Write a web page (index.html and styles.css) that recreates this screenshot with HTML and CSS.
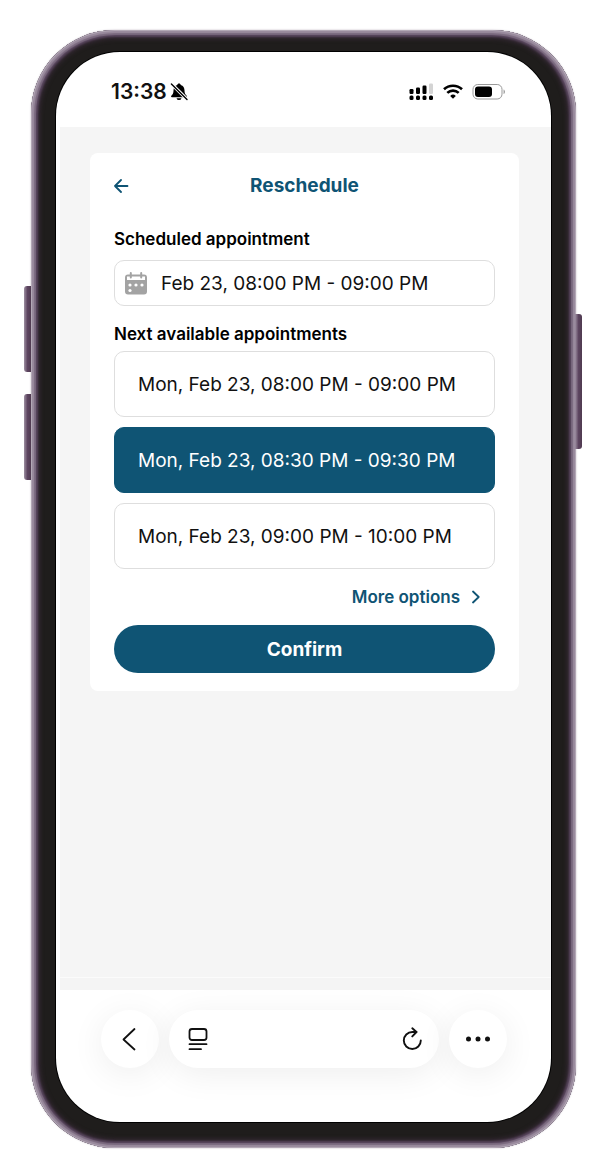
FILE: index.html
```html
<!DOCTYPE html>
<html lang="en">
<head>
    <meta charset="UTF-8">
    <meta name="viewport" content="width=device-width, initial-scale=1.0">
    <title>Reschedule</title>
    <link rel="stylesheet" href="styles.css">
</head>
<body>
    <div class="phone">
        <span class="side-key volume-up"></span>
        <span class="side-key volume-down"></span>
        <span class="side-key power"></span>

        <div class="screen">
            <header class="status-bar">
                <span class="clock">13:38</span>
                <svg class="bell" width="18" height="18" viewBox="0 0 18 18">
                    <path d="M9 0.500c-1 0-1.600.6-1.700 1.400C4.600 2.700 3.500 4.800 3.500 7.500c0 2.800-.8 3.900-2.200 5.200-.5.600-.2 1.500.6 1.500h14.200c.8 0 1.100-.9.600-1.500-1.400-1.300-2.200-2.400-2.200-5.200 0-2.700-1.100-4.800-3.800-5.600C10.600 1.100 10 .5 9 .5z M6.500 15.200a2.600 2.600 0 0 0 5 0z"/>
                    <path d="M2 1.400 17 16.400" stroke="#fff" stroke-width="3.400"/>
                    <path d="M1.400 1 17 16.600" stroke="#000" stroke-width="1.400" stroke-linecap="round"/>
                </svg>
                <div class="status-icons">
                    <svg width="25" height="18" viewBox="0 0 25 18">
                        <rect x="0.500" y="6" width="4" height="5" rx="1.200"/>
                        <rect x="7" y="4.500" width="4" height="6.500" rx="1.200"/>
                        <rect x="13.500" y="2.500" width="4" height="8.500" rx="1.200"/>
                        <rect x="20" y="0.500" width="4" height="10.500" rx="1.200" fill="#d4d4d4"/>
                        <rect x="0.500" y="12.500" width="4" height="4.500" rx="1.500"/>
                        <rect x="7" y="12.500" width="4" height="4.500" rx="1.500"/>
                        <rect x="13.500" y="12.500" width="4" height="4.500" rx="1.500"/>
                        <rect x="20" y="12.500" width="4" height="4.500" rx="1.500"/>
                    </svg>
                    <svg width="20" height="18" viewBox="0 0 20 18" fill="none" stroke="#000" stroke-width="2.600">
                        <path d="M1 6.300a13 13 0 0 1 18 0"/>
                        <path d="M4.300 9.900a8.200 8.200 0 0 1 11.400 0"/>
                        <path d="M10 15.800 7.200 12.900a4 4 0 0 1 5.600 0z" fill="#000" stroke="none"/>
                    </svg>
                    <svg width="34" height="18" viewBox="0 0 34 18">
                        <rect x="1" y="1.500" width="29" height="14.500" rx="4.800" fill="#fff" stroke="#999"/>
                        <rect x="3" y="3.500" width="17" height="10.500" rx="3"/>
                        <path d="M31.600 6.500c1.600.6 1.600 4 0 4.600z" fill="#888"/>
                    </svg>
                </div>
            </header>

            <main class="page">
                <section class="card">
                    <div class="card-header">
                        <button class="back" type="button" aria-label="Back">
                            <svg width="16" height="16" viewBox="0 0 16 16" fill="none" stroke="currentColor" stroke-width="1.800" stroke-linecap="round" stroke-linejoin="round">
                                <path d="M13.500 8H1M7 2 1 8l6 6"/>
                            </svg>
                        </button>
                        <h1>Reschedule</h1>
                    </div>

                    <label class="section-title" for="scheduled">Scheduled appointment</label>
                    <div class="date-field">
                        <svg width="24" height="24" viewBox="0 0 24 24" fill="#a3a3a3">
                            <path d="M4 3.500h16a3 3 0 0 1 3 3v14a3 3 0 0 1-3 3H4a3 3 0 0 1-3-3v-14a3 3 0 0 1 3-3z"/>
                            <path d="M3 5.500h18v3.500H3z" fill="#fff"/>
                            <path d="M6.800 2v4.500M17.200 2v4.500" stroke="#a3a3a3" stroke-width="2" stroke-linecap="round"/>
                            <g fill="#fff">
                                <circle cx="6" cy="14" r="1.600"/>
                                <circle cx="12" cy="14" r="1.600"/>
                                <circle cx="18" cy="14" r="1.600"/>
                                <circle cx="6" cy="19.500" r="1.600"/>
                            </g>
                        </svg>
                        <input id="scheduled" type="text" value="Feb 23, 08:00 PM - 09:00 PM" readonly>
                    </div>

                    <h2 class="section-title">Next available appointments</h2>
                    <div class="options">
                        <button class="option" type="button">Mon, Feb 23, 08:00 PM - 09:00 PM</button>
                        <button class="option selected" type="button" aria-pressed="true">Mon, Feb 23, 08:30 PM - 09:30 PM</button>
                        <button class="option" type="button">Mon, Feb 23, 09:00 PM - 10:00 PM</button>
                    </div>

                    <a class="more" href="#">
                        More options
                        <svg width="8" height="14" viewBox="0 0 8 14" fill="none" stroke="currentColor" stroke-width="1.800" stroke-linecap="round" stroke-linejoin="round">
                            <path d="M1 1.500 6.700 7 1 12.500"/>
                        </svg>
                    </a>
                    <button class="confirm" type="button">Confirm</button>
                </section>
                <div class="page-edge"></div>
            </main>

            <nav class="browser-bar">
                <button class="round-button" type="button" aria-label="Previous page">
                    <svg width="16" height="24" viewBox="0 0 16 24" fill="none" stroke="#111" stroke-width="1.800" stroke-linecap="round" stroke-linejoin="round">
                        <path d="M12.500 2 1.500 12.500l11 10"/>
                    </svg>
                </button>
                <div class="address">
                    <button type="button" aria-label="Page menu">
                        <svg width="20" height="24" viewBox="0 0 20 24" fill="none" stroke="#111" stroke-width="1.800" stroke-linecap="round">
                            <rect x="1.500" y="2" width="17" height="11" rx="2.500"/>
                            <path d="M1.500 17.200h17M1.500 22.200h11.500"/>
                        </svg>
                    </button>
                    <button type="button" aria-label="Reload">
                        <svg width="20" height="24" viewBox="0 0 20 24" fill="none" stroke="#111" stroke-width="1.900" stroke-linecap="round" stroke-linejoin="round">
                            <path d="M18.800 13.500a8.500 8.500 0 1 1-8.500-8.500h4"/>
                            <path d="M10.300 1.300 14.500 5 10.300 9.400"/>
                        </svg>
                    </button>
                </div>
                <button class="round-button" type="button" aria-label="More">
                    <svg width="26" height="6" viewBox="0 0 26 6" fill="#111">
                        <circle cx="3.500" cy="3" r="2.500"/>
                        <circle cx="13" cy="3" r="2.500"/>
                        <circle cx="22.500" cy="3" r="2.500"/>
                    </svg>
                </button>
            </nav>
        </div>
    </div>
</body>
</html>
```

FILE: styles.css
```css
* {
    box-sizing: border-box;
}
body {
    margin: 0;
    min-height: 100vh;
    padding: 30px 24px 21px 31px;
    display: flex;
    background: #fff;
    color: #111;
    font-family: Inter, sans-serif;
}
h1, h2 {
    margin: 0;
}
button {
    font-family: inherit;
    cursor: pointer;
}
svg {
    display: block;
    flex: none;
}

/* phone frame */
.phone {
    position: relative;
    flex: 1;
    display: flex;
    padding: 22px 25px 26px;
    border-radius: 84px;
    background: #1f1d1c;
    box-shadow:
        inset 0 0 0 1px #b3a8b6,
        inset 0 0 1px 3px #9a8b9e,
        inset 0 0 1px 5px #7b6a7f,
        inset 0 0 2px 7px #55435a,
        inset 0 0 4px 9px #352934,
        0 0 2px #b9afbc;
}
.side-key {
    position: absolute;
    width: 7px;
    background: linear-gradient(to right, #9d8fa1, #5d4560 50%, #4f3a50);
}
.volume-up {
    left: -7px;
    top: 256px;
    height: 86px;
    border-radius: 3px 0 0 3px;
}
.volume-down {
    left: -7px;
    top: 364px;
    height: 86px;
    border-radius: 3px 0 0 3px;
}
.power {
    right: -6px;
    top: 284px;
    height: 135px;
    border-radius: 0 3px 3px 0;
}
.screen {
    flex: 1;
    display: flex;
    flex-direction: column;
    border-radius: 64px;
    overflow: hidden;
    background: #fff;
    box-shadow: 0 0 0 1px #000;
}

/* status bar */
.status-bar {
    display: flex;
    align-items: center;
    height: 75px;
    padding: 4px 45px 0 55px;
}
.clock {
    font-size: 21px;
    font-weight: 600;
}
.bell {
    margin-left: 3px;
}
.status-icons {
    display: flex;
    gap: 9px;
    margin-left: auto;
}

/* page */
.page {
    flex: 1;
    display: flex;
    flex-direction: column;
    margin-left: 4px;
    padding-top: 26px;
    background: #f5f5f5;
}
.card {
    margin: 0 32px 0 30px;
    padding: 20px 24px 18px;
    border-radius: 8px;
    background: #fff;
}
.card-header {
    display: grid;
    grid-template-columns: 16px 1fr 16px;
    align-items: center;
    margin-bottom: 28px;
}
.card-header h1 {
    font-size: 19px;
    line-height: 26px;
    font-weight: 700;
    text-align: center;
    color: #0f5474;
}
.back {
    padding: 0;
    border: none;
    background: none;
    color: #0f5474;
}
.section-title {
    display: block;
    font-size: 17px;
    line-height: 24px;
    font-weight: 600;
    color: #000;
}
.date-field {
    display: flex;
    align-items: center;
    gap: 13px;
    height: 46px;
    margin: 9px 0 16px;
    padding: 0 9px;
    border: 1px solid #dedede;
    border-radius: 10px;
}
.date-field input {
    flex: 1;
    min-width: 0;
    padding: 0;
    border: none;
    outline: none;
    background: none;
    color: #111;
    font-family: inherit;
    font-size: 19px;
}
.options {
    display: flex;
    flex-direction: column;
    gap: 10px;
    margin-top: 5px;
}
.option {
    height: 66px;
    padding: 0 23px;
    border: 1px solid #dedede;
    border-radius: 10px;
    background: #fff;
    color: #111;
    font-size: 19px;
    text-align: left;
}
.option.selected {
    border-color: #0f5474;
    background: #0f5474;
    color: #fff;
}
.more {
    display: flex;
    justify-content: flex-end;
    align-items: center;
    gap: 12px;
    margin: 16px 0;
    padding-right: 15px;
    color: #0f5474;
    font-size: 17px;
    line-height: 24px;
    font-weight: 600;
    text-decoration: none;
}
.confirm {
    width: 100%;
    height: 48px;
    border: none;
    border-radius: 24px;
    background: #0f5474;
    color: #fff;
    font-size: 19px;
    font-weight: 700;
}
.page-edge {
    height: 13px;
    margin-top: auto;
    border-top: 1px solid #fbfbfb;
    background: #f4f4f4;
}

/* browser controls */
.browser-bar {
    display: flex;
    gap: 10px;
    height: 132px;
    padding: 20px 44px 0 45px;
}
.round-button {
    display: flex;
    align-items: center;
    justify-content: center;
    width: 58px;
    height: 58px;
    padding: 0;
    border: none;
    border-radius: 50%;
    background: #fff;
    box-shadow: 0 6px 34px rgba(0,0,0,0.07);
}
.address {
    flex: 1;
    display: flex;
    align-items: center;
    justify-content: space-between;
    height: 58px;
    padding: 0 17px 0 19px;
    border-radius: 29px;
    background: #fff;
    box-shadow: 0 6px 34px rgba(0,0,0,0.07);
}
.address button {
    padding: 0;
    border: none;
    background: none;
}
```
